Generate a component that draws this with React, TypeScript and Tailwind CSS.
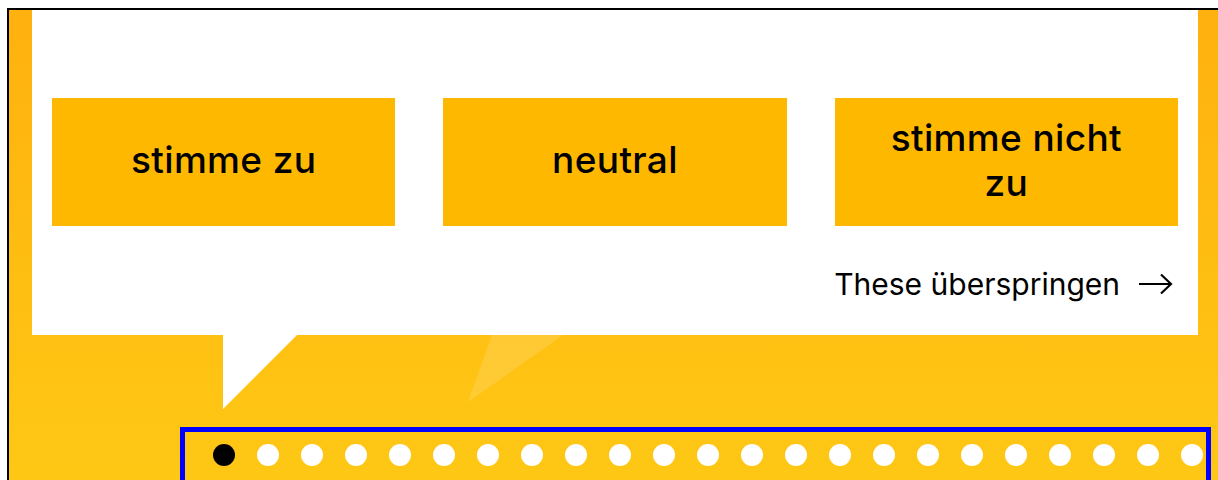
import React from "react";

const CHOICES = ["stimme zu", "neutral", "stimme nicht zu"];
const DOTS = Array.from({ length: 23 }, (_, i) => i);

export default function App() {
  return (
    <div className="h-[480px] w-[1218px] overflow-hidden bg-white font-['Inter',sans-serif] text-black">
      <div className="relative ml-[7px] mt-[8px] h-[500px] w-[1240px] border-l-2 border-t-2 border-black bg-gradient-to-b from-[#ffb10e] to-[#fec915]">
        {/* faint light wedge and the card's speech tail */}
        <svg className="absolute left-0 top-0" width="700" height="420" viewBox="0 0 700 420">
          <polygon points="483,325 554,325 459,392" fill="#ffffff" fillOpacity="0.14" />
          <polygon points="214,324 289,324 214,399" fill="#ffffff" />
        </svg>

        {/* question card */}
        <div className="relative ml-[23px] h-[325px] w-[1166px] bg-white px-[20px] pt-[88px]">
          <div className="grid grid-cols-3 gap-[48px]">
            {CHOICES.map((c) => (
              <button
                key={c}
                className="flex h-[128px] items-center justify-center bg-[#ffb800] px-[50px] pb-[5px] text-center text-[37px] font-medium leading-[45px] tracking-[0.01em]"
              >
                {c}
              </button>
            ))}
          </div>
          <div className="mt-[40px] flex items-center justify-end gap-[18px] pr-[5px] text-[30px] leading-[36px]">
            <span>These überspringen</span>
            <svg width="35" height="22" viewBox="0 0 35 22" fill="none" stroke="#000" strokeWidth="2.2">
              <path d="M1 11h32M23 1.5l10 9.5-10 9.5" />
            </svg>
          </div>
        </div>

        {/* progress dots */}
        <div className="ml-[171px] mt-[92px] h-[80px] w-[1031px] border-[5px] border-[#0000ff] pl-[28px] pt-[12px]">
          <div className="flex gap-[22px]">
            {DOTS.map((d) => (
              <span
                key={d}
                className={`h-[22px] w-[22px] shrink-0 rounded-full ${d === 0 ? "bg-black" : "bg-white"}`}
              />
            ))}
          </div>
        </div>
      </div>
    </div>
  );
}
